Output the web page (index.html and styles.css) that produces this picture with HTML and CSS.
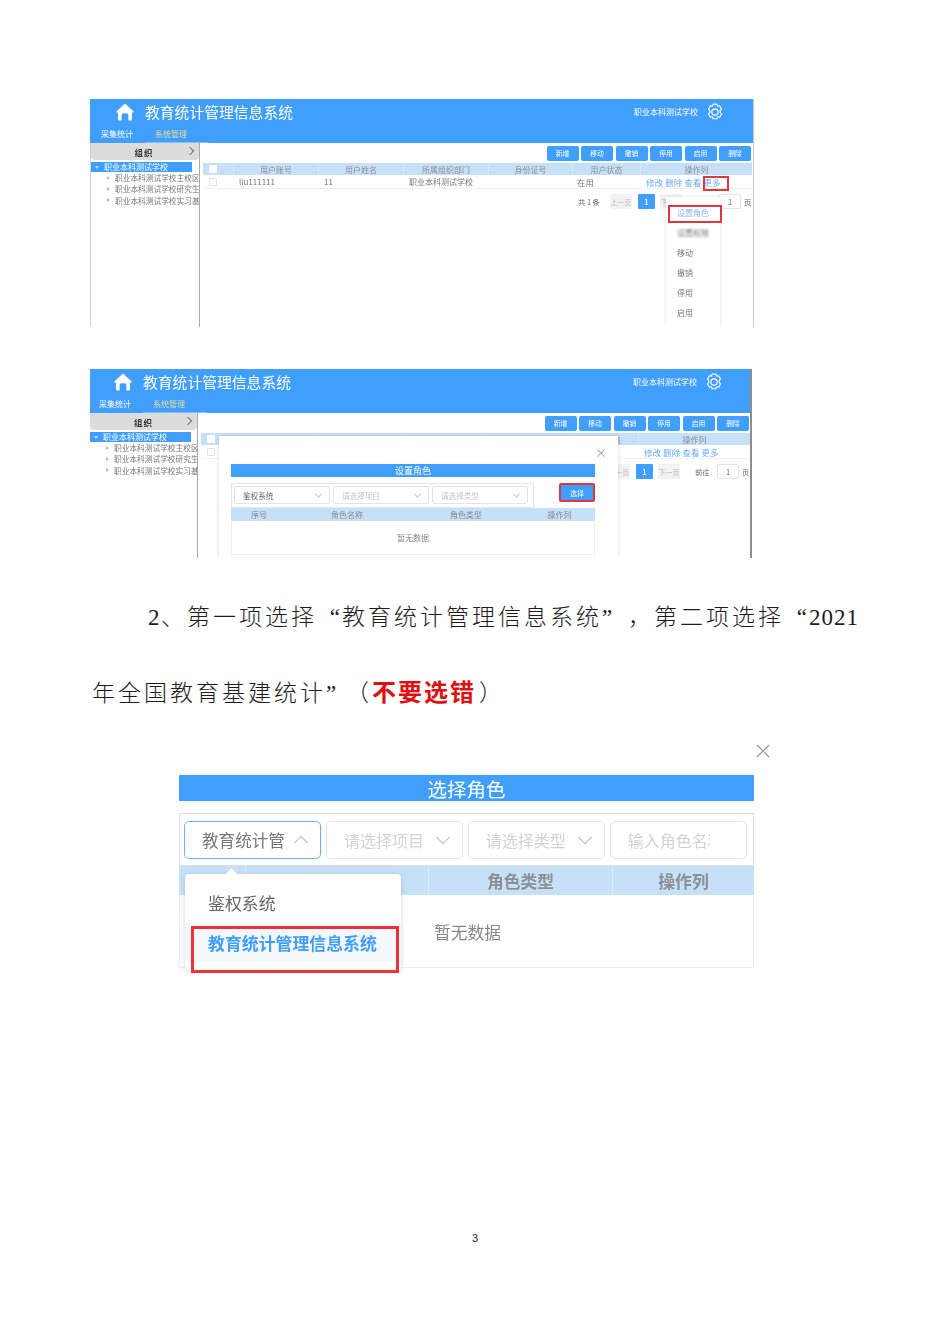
FILE: index.html
```html
<!DOCTYPE html>
<html lang="zh-CN">
<head>
<meta charset="utf-8">
<title>选择角色</title>
<link rel="stylesheet" href="styles.css">
</head>
<body>
<main class="page">

  <section class="shot shot-a">
    <header class="app-head">
      <div class="brand">
        <svg class="home" viewBox="0 0 18 18"><path d="M9 .6 17.4 8.200c.5.5.2 1.300-.5 1.300H16v7c0 .6-.4 1-1 1h-2.600v-5.200c0-1.200-.9-2-2-2H7.600c-1.100 0-2 .8-2 2v5.200H3c-.6 0-1-.4-1-1v-7H1.100C.4 9.500.1 8.700.6 8.200Z" fill="#fff"/></svg>
        <span class="app-title">教育统计管理信息系统</span>
        <span class="school">职业本科测试学校</span>
        <svg class="gear" viewBox="0 0 16 16"><path d="M6.300 1h3.400l.6 1.800 1.800-.4 1.700 2.900-1.200 1.400 0 1.600 1.200 1.400-1.700 2.900-1.800-.4-.6 1.800H6.300l-.6-1.800-1.800.4-1.700-2.900 1.200-1.400 0-1.600-1.200-1.400 1.700-2.900 1.800.4Z" fill="none" stroke="#fff" stroke-width="1" stroke-linejoin="round"/><circle cx="8" cy="8" r="2.800" fill="none" stroke="#fff" stroke-width="1"/></svg>
      </div>
      <nav class="app-nav"><span>采集统计</span><span class="nav-on">系统管理</span></nav>
    </header>
    <div class="app-body">
      <aside class="side">
        <div class="side-head"><b>组织</b><i class="chev-right"></i></div>
        <div class="tree-on"><i class="tri-down"></i>职业本科测试学校</div>
        <div class="tree-row"><i class="tri-right"></i>职业本科测试学校主校区</div>
        <div class="tree-row"><i class="tri-right"></i>职业本科测试学校研究生院</div>
        <div class="tree-row"><i class="tri-right"></i>职业本科测试学校实习基地</div>
      </aside>
      <div class="main">
        <div class="toolbar"><button>新增</button><button>移动</button><button>撤销</button><button>停用</button><button>启用</button><button>删除</button></div>
        <div class="grid grid-head"><span class="cell-check"><i class="check check-head"></i></span><span>用户账号</span><span>用户姓名</span><span>所属组织部门</span><span>身份证号</span><span>用户状态</span><span>操作列</span></div>
        <div class="grid grid-row"><span class="cell-check"><i class="check"></i></span><span class="cell-left">liu111111</span><span class="cell-left">11</span><span class="cell-left">职业本科测试学校</span><span></span><span class="cell-left cell-state">在用</span><span class="ops">修改 删除 查看 更多</span></div>
        <div class="pager"><span class="total">共 1 条</span><span class="pg-btn">上一页</span><span class="pg-cur">1</span><span class="pg-btn">下一页</span><span class="goto">前往</span><span class="pg-input">1</span><span>页</span></div>
      </div>
    </div>
    <div class="menu">
      <div class="menu-item menu-on">设置角色</div>
      <div class="menu-item menu-blur">设置权限</div>
      <div class="menu-item">移动</div>
      <div class="menu-item">撤销</div>
      <div class="menu-item">停用</div>
      <div class="menu-item">启用</div>
    </div>
    <div class="mark mark-more"></div>
    <div class="mark mark-role"></div>
  </section>

  <section class="shot shot-b">
    <header class="app-head">
      <div class="brand">
        <svg class="home" viewBox="0 0 18 18"><path d="M9 .6 17.4 8.200c.5.5.2 1.300-.5 1.300H16v7c0 .6-.4 1-1 1h-2.600v-5.200c0-1.200-.9-2-2-2H7.600c-1.100 0-2 .8-2 2v5.200H3c-.6 0-1-.4-1-1v-7H1.100C.4 9.500.1 8.700.6 8.200Z" fill="#fff"/></svg>
        <span class="app-title">教育统计管理信息系统</span>
        <span class="school">职业本科测试学校</span>
        <svg class="gear" viewBox="0 0 16 16"><path d="M6.300 1h3.400l.6 1.800 1.800-.4 1.700 2.900-1.200 1.400 0 1.600 1.200 1.400-1.700 2.900-1.800-.4-.6 1.800H6.300l-.6-1.800-1.800.4-1.700-2.900 1.200-1.400 0-1.600-1.200-1.400 1.700-2.900 1.800.4Z" fill="none" stroke="#fff" stroke-width="1" stroke-linejoin="round"/><circle cx="8" cy="8" r="2.800" fill="none" stroke="#fff" stroke-width="1"/></svg>
      </div>
      <nav class="app-nav"><span>采集统计</span><span class="nav-on">系统管理</span></nav>
    </header>
    <div class="app-body">
      <aside class="side">
        <div class="side-head"><b>组织</b><i class="chev-right"></i></div>
        <div class="tree-on"><i class="tri-down"></i>职业本科测试学校</div>
        <div class="tree-row"><i class="tri-right"></i>职业本科测试学校主校区</div>
        <div class="tree-row"><i class="tri-right"></i>职业本科测试学校研究生院</div>
        <div class="tree-row"><i class="tri-right"></i>职业本科测试学校实习基地</div>
      </aside>
      <div class="main">
        <div class="toolbar"><button>新增</button><button>移动</button><button>撤销</button><button>停用</button><button>启用</button><button>删除</button></div>
        <div class="grid grid-head"><span class="cell-check"><i class="check check-head"></i></span><span>用户账号</span><span>用户姓名</span><span>所属组织部门</span><span>身份证号</span><span>用户状态</span><span>操作列</span></div>
        <div class="grid grid-row"><span class="cell-check"><i class="check"></i></span><span class="cell-left">liu111111</span><span class="cell-left">11</span><span class="cell-left">职业本科测试学校</span><span></span><span class="cell-left cell-state">在用</span><span class="ops">修改 删除 查看 更多</span></div>
        <div class="pager"><span class="total">共 1 条</span><span class="pg-btn">上一页</span><span class="pg-cur">1</span><span class="pg-btn">下一页</span><span class="goto">前往</span><span class="pg-input">1</span><span>页</span></div>
      </div>
    </div>
    <div class="dialog">
      <span class="dlg-close">×</span>
      <div class="dlg-title">设置角色</div>
      <div class="dlg-filter">
        <div class="dlg-selects">
          <div class="dlg-select"><span>鉴权系统</span><i class="chev-down"></i></div>
          <div class="dlg-select dlg-ph"><span>请选择项目</span><i class="chev-down"></i></div>
          <div class="dlg-select dlg-ph"><span>请选择类型</span><i class="chev-down"></i></div>
        </div>
        <button class="dlg-choose">选择</button>
      </div>
      <div class="dlg-head"><span>序号</span><span>角色名称</span><span>角色类型</span><span>操作列</span></div>
      <div class="dlg-empty">暂无数据</div>
    </div>
  </section>

  <p class="doc-text"><span class="line-one"><span class="num-first">2</span>、第一项选择<span class="q-open">“</span>教育统计管理信息系统<span class="q-close">”</span>，第二项选择<span class="q-open">“</span><span class="num">2021</span></span><span class="line-two">年全国教育基建统计<span class="q-close q-short">”</span>（<strong>不要选错</strong>）</span></p>

  <section class="role">
    <svg class="role-close" viewBox="0 0 14 14"><path d="M1 1 13 13M13 1 1 13" stroke="#999" stroke-width="1.200" fill="none"/></svg>
    <div class="role-panel">
      <div class="role-title">选择角色</div>
      <div class="role-filter">
        <div class="role-select role-focus"><span>教育统计管理信息系统</span><i class="chev-up"></i></div>
        <div class="role-select role-ph"><span>请选择项目</span><i class="chev-big"></i></div>
        <div class="role-select role-ph"><span>请选择类型</span><i class="chev-big"></i></div>
        <div class="role-select role-ph role-input"><span>输入角色名称</span></div>
      </div>
      <div class="role-head"><span class="role-covered">序号</span><span class="role-covered">角色名称</span><span>角色类型</span><span>操作列</span></div>
      <div class="role-empty"><span>暂无数据</span></div>
      <div class="role-pop">
        <i class="pop-arrow"></i>
        <div class="pop-item">鉴权系统</div>
        <div class="pop-item pop-on">教育统计管理信息系统</div>
      </div>
      <div class="mark mark-pop"></div>
    </div>
  </section>

  <footer class="page-no">3</footer>
</main>
</body>
</html>
```
FILE: styles.css
```css
* { box-sizing: border-box; }
html, body { margin: 0; background: #fff; }
body { font-family: "Noto Sans CJK SC", "Liberation Sans", sans-serif; color: #666; }
i { display: block; font-style: normal; }
button { font-family: inherit; border: 0; padding: 0; }

.page { width: 950px; height: 1344px; padding-top: 99px; overflow: hidden; }

/* screenshots */
.shot { position: relative; margin-left: 90px; overflow: hidden; display: flex; flex-direction: column; background: #fff; filter: blur(.35px); }
.shot-a { width: 664px; height: 228px; border-right: 1px solid #c8c8c8; }
.shot-b { width: 662px; height: 189px; margin-top: 42px; border-right: 2px solid #8d8d8d; }

.app-head { height: 44px; background: #409eff; color: #fff; flex: none; }
.brand { height: 26px; display: flex; align-items: center; }
.shot-a .brand { padding-left: 26px; }
.shot-b .brand { padding-left: 24px; }
.home { width: 18px; height: 18px; flex: none; }
.app-title { margin-left: 11px; font-size: 14.800px; line-height: 20px; }
.school { margin-left: auto; font-size: 8px; line-height: 12px; }
.gear { width: 18px; height: 18px; margin-left: 8px; margin-right: 29px; flex: none; }
.shot-b .gear { margin-right: 27px; }
.app-nav { height: 18px; display: flex; align-items: stretch; font-size: 8px; line-height: 18px; }
.shot-a .app-nav { padding-left: 11px; }
.shot-b .app-nav { padding-left: 9px; }
.nav-on { margin-left: 12px; padding: 0 22px 0 10px; color: #e8dc9c; border-bottom: 1px solid rgba(255,255,255,.35); }

.app-body { flex: 1; display: flex; min-height: 0; }
.side { border-left: 1px solid #d0d0d0; border-right: 1px solid #aaa; overflow: hidden; flex: none; white-space: nowrap; font-size: 7.700px; }
.shot-a .side { width: 110px; }
.shot-b .side { width: 108px; border-left: 0; }
.side-head { height: 17px; background: #dcdcdc; border-radius: 0 0 4px 4px; position: relative; display: flex; align-items: center; justify-content: center; padding-right: 2px; color: #333; font-size: 8.500px; letter-spacing: 1px; }
.shot-b .side-head { padding-right: 0; }
.chev-right { position: absolute; right: 6px; top: 5px; width: 6px; height: 6px; border-top: 1px solid #777; border-right: 1px solid #777; transform: rotate(45deg); }
.tree-on { width: 101px; height: 10px; margin-top: 2px; background: #409eff; color: #fff; display: flex; align-items: center; line-height: 10px; font-size: 8px; }
.tri-down { margin: 0 5px 0 4px; width: 0; height: 0; border: 2px solid transparent; border-top: 3px solid #b8dcff; border-bottom: 0; }
.tree-row { height: 11.300px; display: flex; align-items: center; color: #777; padding-left: 16px; line-height: 11px; }
.tree-on + .tree-row { margin-top: 0; }
.tri-right { margin-right: 5px; width: 0; height: 0; flex: none; border: 2px solid transparent; border-left: 3px solid #bbb; border-right: 0; }

.main { flex: 1; min-width: 0; padding-left: 3px; overflow: hidden; }
.toolbar { width: 549px; padding: 3px 1px 0 0; display: flex; justify-content: flex-end; gap: 2.500px; }
.toolbar button { width: 32px; height: 15px; background: #409eff; color: #fff; font-size: 6.800px; line-height: 15px; border-radius: 2px; }
.grid { width: 549px; display: grid; grid-template-columns: 30px 85px 85px 85px 84px 68px 112px; font-size: 8px; }
.grid span { display: flex; align-items: center; justify-content: center; min-width: 0; white-space: nowrap; overflow: hidden; }
.grid-head { height: 12px; margin-top: 2px; background: #c6e0f8; color: #8a8f96; }
.grid-head span + span { border-left: 1px solid #dbeafa; }
.grid-row { height: 14px; border-bottom: 1px solid #f0f0f0; color: #777; }
.grid .cell-check { justify-content: flex-start; padding-left: 6px; }
.grid-row .cell-left { justify-content: flex-start; padding-left: 6px; }
.grid-row .cell-state { font-size: 8.500px; padding-left: 5px; }
.grid-row .ops { color: #6aaef5; font-size: 8.500px; justify-content: flex-start; padding-left: 6px; word-spacing: .3px; }
.check { width: 8px; height: 8px; border: 1px solid #e2e2e2; border-radius: 1px; background: #fff; }
.check-head { border-color: #fff; }
.pager { width: 549px; margin-top: 5px; height: 15px; display: flex; align-items: center; font-size: 7.300px; color: #666; padding-left: 375px; white-space: nowrap; }
.total { width: 32px; }
.pg-btn { width: 22px; height: 15px; background: #f2f2f2; color: #b8b8b8; display: flex; align-items: center; justify-content: center; font-size: 6.800px; }
.pg-cur { width: 17px; height: 15px; margin: 0 5px 0 6px; background: #409eff; color: #fff; border-radius: 1px; display: flex; align-items: center; justify-content: center; font-weight: 700; }
.goto { margin-left: 15px; width: 22px; }
.pg-input { width: 22px; height: 15px; margin-right: 3px; border: 1px solid #e4e4e4; border-radius: 2px; display: flex; align-items: center; justify-content: center; }

.menu { position: absolute; left: 576px; top: 98px; width: 54px; bottom: 0; background: #fff; box-shadow: 0 0 3px rgba(0,0,0,.14); padding-top: 6px; }
.menu-item { height: 20px; padding-left: 11px; font-size: 8px; line-height: 20px; color: #777; }
.menu-on { color: #7db8f5; }
.menu-blur { filter: blur(1.200px); }
.mark { position: absolute; border: 2px solid #e1353f; }
.mark-more { left: 613px; top: 77px; width: 26px; height: 15px; }
.mark-role { left: 578px; top: 106px; width: 54px; height: 18px; }

.dialog { position: absolute; left: 129px; top: 67px; width: 399px; bottom: 0; background: #fff; box-shadow: 0 0 4px rgba(0,0,0,.16); padding: 28px 23px 0 12px; }
.dlg-close { position: absolute; right: 11px; top: 9px; font-size: 12px; line-height: 16px; color: #999; }
.dlg-title { height: 13px; background: #409eff; color: #fff; font-size: 9px; line-height: 13px; text-align: center; }
.dlg-filter { display: flex; align-items: flex-start; margin-top: 6px; }
.dlg-selects { width: 303px; height: 25px; border: 1px solid #e5e5e5; padding: 2px; display: flex; gap: 3px; }
.dlg-select { width: 96px; height: 18px; border: 1px solid #e4e4e4; border-radius: 2px; padding: 0 8px; display: flex; align-items: center; justify-content: space-between; font-size: 7.600px; color: #666; }
.dlg-ph { color: #c4c4c4; }
.chev-down { width: 5px; height: 5px; border-right: 1px solid #bbb; border-bottom: 1px solid #bbb; transform: rotate(45deg) translate(-1px, -1px); }
.dlg-choose { margin: 0 0 0 25px; width: 36px; height: 19px; background: #409eff; color: #fff; font-size: 7px; border: 2px solid #e1353f; border-radius: 2px; }
.dlg-head { display: grid; grid-template-columns: 56px 120px 118px 69px; height: 13px; background: #c6e0f8; color: #858a90; font-size: 8px; text-align: center; line-height: 13px; margin-top: 0; }
.dlg-empty { height: 34px; border: 1px solid #eee; border-top: 0; font-size: 8px; line-height: 34px; text-align: center; color: #888; }

/* document text */
.doc-text { margin: 20px 0 0 92px; width: 770px; height: 150px; font-family: "Noto Sans CJK SC", serif; font-weight: 300; color: #1c1c1c; font-size: 23px; letter-spacing: 3px; line-height: 75px; }
.line-one { display: block; height: 75px; padding-left: 56px; white-space: nowrap; }
.line-two { display: block; height: 75px; white-space: nowrap; }
.num-first, .num { font-family: "Liberation Serif", serif; }
.num-first { letter-spacing: 1.500px; }
.num { letter-spacing: 1px; }
.q-open, .q-close { display: inline-block; font-family: "Liberation Serif", serif; letter-spacing: 0; }
.q-open { width: 25px; text-align: right; padding-right: 2px; }
.q-close { width: 26px; text-align: left; }
.q-short { width: 20px; }
.doc-text strong { color: #e01010; font-weight: 700; font-size: 24px; letter-spacing: 2px; padding-right: 3px; }

/* role panel */
.role { margin: 16px 0 0 179px; width: 591px; display: flex; flex-direction: column; align-items: flex-end; filter: blur(.35px); }
.role-close { width: 14px; height: 14px; margin-bottom: 17px; }
.role-panel { position: relative; width: 575px; align-self: flex-start; }
.role-title { height: 26px; background: #409eff; color: #fff; text-align: center; font-size: 19.500px; line-height: 28px; }
.role-filter { height: 53px; margin-top: 12px; border: 1px solid #ddd; padding: 7px 6px 0 4px; display: flex; gap: 4.500px; }
.role-select { width: 137.500px; height: 38px; border: 1.500px solid #e6e6e6; border-radius: 5px; padding: 0 14px 0 17px; display: flex; align-items: center; gap: 8px; font-size: 16px; color: #777; white-space: nowrap; overflow: hidden; }
.role-select span { flex: 1; min-width: 0; overflow: hidden; }
.role-focus { font-size: 16.600px; gap: 12px; border-color: #6db0f5; }
.role-ph { color: #d2d2d2; }
.role-input { padding-right: 36px; }
.chev-up, .chev-big { width: 10px; height: 10px; flex: none; }
.chev-up { border-top: 1.500px solid #bbb; border-left: 1.500px solid #bbb; transform: rotate(45deg) translate(2px, 2px); }
.chev-big { border-right: 1.500px solid #bbb; border-bottom: 1.500px solid #bbb; transform: rotate(45deg) translate(-2px, -2px); }
.role-head { height: 29px; display: grid; grid-template-columns: 66px 183px 184px 142px; background: #c6e0f8; color: #8c8f94; font-size: 16.800px; font-weight: 700; text-align: center; line-height: 30px; overflow: hidden; }
.role-head span + span { border-left: 1px solid #dcebfa; }
.role-head .role-covered { line-height: 38px; }
.role-empty { height: 73px; border: 1px solid #eee; border-top: 0; font-size: 16.800px; color: #888; padding: 24px 0 0 254px; line-height: 26px; }
.role-pop { position: absolute; left: 6px; top: 99px; width: 216px; height: 96px; background: #fff; border-radius: 4px; box-shadow: 0 1px 5px rgba(0,0,0,.16); padding-top: 8px; }
.pop-arrow { position: absolute; left: 42px; top: -4px; width: 9px; height: 9px; background: #fff; transform: rotate(45deg); }
.pop-item { height: 41px; padding-left: 23px; font-size: 16.900px; line-height: 42px; color: #666; }
.pop-on { height: 39px; line-height: 39px; background: #f5f7fa; color: #409eff; font-weight: 700; }
.mark-pop { left: 12px; top: 151px; width: 208px; height: 47px; border-width: 3px; border-color: #ee3338; }

.page-no { margin-top: 263px; height: 14px; text-align: center; font-family: "Liberation Sans", sans-serif; font-size: 11px; line-height: 14px; color: #222; }
```
